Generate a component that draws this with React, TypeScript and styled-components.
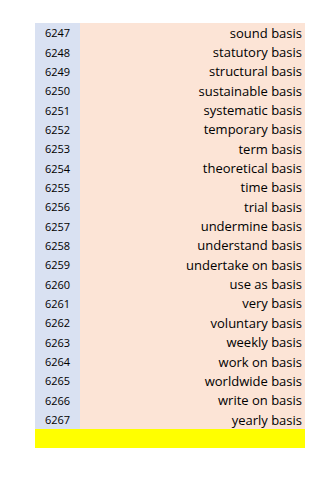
import React from 'react';
import styled, { createGlobalStyle } from 'styled-components';

const rows: [number, string][] = [
  [6247, 'sound basis'],
  [6248, 'statutory basis'],
  [6249, 'structural basis'],
  [6250, 'sustainable basis'],
  [6251, 'systematic basis'],
  [6252, 'temporary basis'],
  [6253, 'term basis'],
  [6254, 'theoretical basis'],
  [6255, 'time basis'],
  [6256, 'trial basis'],
  [6257, 'undermine basis'],
  [6258, 'understand basis'],
  [6259, 'undertake on basis'],
  [6260, 'use as basis'],
  [6261, 'very basis'],
  [6262, 'voluntary basis'],
  [6263, 'weekly basis'],
  [6264, 'work on basis'],
  [6265, 'worldwide basis'],
  [6266, 'write on basis'],
  [6267, 'yearly basis'],
];

export default function App() {
  return (
    <>
      <GlobalStyle />
      <Sheet>
        <Table>
          {rows.map(([n, phrase]) => (
            <Row key={n}>
              <NumCell>{n}</NumCell>
              <TextCell>{phrase}</TextCell>
            </Row>
          ))}
          <Highlight />
        </Table>
      </Sheet>
    </>
  );
}

const GlobalStyle = createGlobalStyle`
  body {
    margin: 0;
    background: #ffffff;
    font-family: "Open Sans", "Liberation Sans", sans-serif;
  }
`;

const Sheet = styled.div`
  padding: 23px 0 0 35px;
`;

const Table = styled.div`
  width: 270px;
  display: flex;
  flex-direction: column;
`;

const Row = styled.div`
  display: grid;
  grid-template-columns: 45px 1fr;
  height: 19.35px;
  font-size: 13px;
  color: #000000;
`;

const NumCell = styled.div`
  background: #d9e1f2;
  display: flex;
  align-items: center;
  justify-content: center;
  font-size: 11px;
`;

const TextCell = styled.div`
  background: #fce4d6;
  display: flex;
  align-items: center;
  justify-content: flex-end;
  padding-right: 3px;
  white-space: nowrap;
`;

const Highlight = styled.div`
  height: 19px;
  background: #ffff00;
`;
